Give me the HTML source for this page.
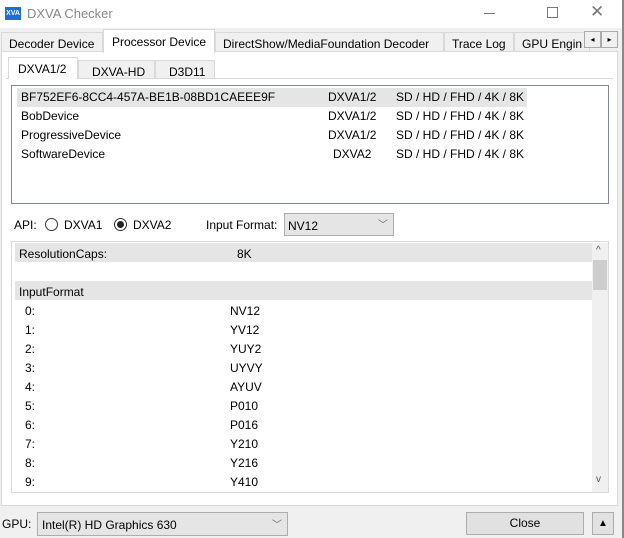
<!DOCTYPE html><html><head><style>
*{margin:0;padding:0;box-sizing:border-box}
body{width:624px;height:538px;background:#f0f0f0;font-family:"Liberation Sans",sans-serif;font-size:12px;color:#000;position:relative;overflow:hidden}
.a{position:absolute;white-space:nowrap}
</style></head><body>
<div class="a" style="left:0;top:0;width:624px;height:28px;background:#fff"></div>
<div class="a" style="left:5px;top:7px;width:16px;height:13px;background:#1e6fd0;color:#fff;font-size:7px;font-weight:bold;line-height:13px;text-align:center">XVA</div>
<div class="a" style="left:27px;top:6px;font-size:13px;color:#888">DXVA Checker</div>
<div class="a" style="left:484px;top:13px;width:11px;height:1px;background:#777"></div>
<div class="a" style="left:547px;top:7px;width:11px;height:11px;border:1px solid #777"></div>
<div class="a" style="left:590px;top:2px;font-size:17px;color:#777">✕</div>
<div class="a" style="left:622px;top:0;width:2px;height:538px;background:#888"></div>
<div class="a" style="left:1px;top:51px;width:617px;height:455px;border:1px solid #d9d9d9;background:#fff"></div>
<div class="a" style="left:1px;top:32px;width:102px;height:20px;border:1px solid #d9d9d9;background:#f0f0f0;padding:4px 0 0 7px">Decoder Device</div>
<div class="a" style="left:103px;top:29px;width:112px;height:24px;border:1px solid #d9d9d9;border-bottom:none;background:#fff;padding:5px 0 0 8px">Processor Device</div>
<div class="a" style="left:215px;top:32px;width:229px;height:20px;border:1px solid #d9d9d9;background:#f0f0f0;padding:4px 0 0 7px">DirectShow/MediaFoundation Decoder</div>
<div class="a" style="left:444px;top:32px;width:70px;height:20px;border:1px solid #d9d9d9;background:#f0f0f0;padding:4px 0 0 7px">Trace Log</div>
<div class="a" style="left:514px;top:32px;width:76px;height:20px;border:1px solid #d9d9d9;background:#f0f0f0;padding:4px 0 0 7px;overflow:hidden">GPU Engin</div>
<div class="a" style="left:584px;top:31px;width:17px;height:17px;border:1px solid #aaa;background:#f0f0f0;font-size:8px;text-align:center;line-height:15px">◂</div>
<div class="a" style="left:601px;top:31px;width:17px;height:17px;border:1px solid #aaa;background:#f0f0f0;font-size:8px;text-align:center;line-height:15px">▸</div>
<div class="a" style="left:6px;top:78px;width:607px;height:424px;border-top:1px solid #d9d9d9"></div>
<div class="a" style="left:8px;top:57px;width:70px;height:22px;border:1px solid #d9d9d9;border-bottom:none;background:#fff;padding:4px 0 0 9px">DXVA1/2</div>
<div class="a" style="left:78px;top:60px;width:77px;height:19px;border:1px solid #d9d9d9;background:#f0f0f0;padding:4px 0 0 13px">DXVA-HD</div>
<div class="a" style="left:155px;top:60px;width:60px;height:19px;border:1px solid #d9d9d9;background:#f0f0f0;padding:4px 0 0 13px">D3D11</div>
<div class="a" style="left:11px;top:85px;width:598px;height:119px;border:1px solid #828790;background:#fff"></div>
<div class="a" style="left:17px;top:88px;width:510px;height:19px;background:#e5e5e5"></div>
<div class="a" style="left:21px;top:90px;line-height:15px">BF752EF6-8CC4-457A-BE1B-08BD1CAEEE9F</div>
<div class="a" style="left:21px;top:109px;line-height:15px">BobDevice</div>
<div class="a" style="left:21px;top:128px;line-height:15px">ProgressiveDevice</div>
<div class="a" style="left:21px;top:147px;line-height:15px">SoftwareDevice</div>
<div class="a" style="left:328px;top:90px;line-height:15px">DXVA1/2</div>
<div class="a" style="left:328px;top:109px;line-height:15px">DXVA1/2</div>
<div class="a" style="left:328px;top:128px;line-height:15px">DXVA1/2</div>
<div class="a" style="left:333px;top:147px;line-height:15px">DXVA2</div>
<div class="a" style="left:396px;top:90px;line-height:15px">SD / HD / FHD / 4K / 8K</div>
<div class="a" style="left:396px;top:109px;line-height:15px">SD / HD / FHD / 4K / 8K</div>
<div class="a" style="left:396px;top:128px;line-height:15px">SD / HD / FHD / 4K / 8K</div>
<div class="a" style="left:396px;top:147px;line-height:15px">SD / HD / FHD / 4K / 8K</div>
<div class="a" style="left:14px;top:218px">API:</div>
<div class="a" style="left:45px;top:218px;width:13px;height:13px;border:1px solid #333;border-radius:50%;background:#fff"></div>
<div class="a" style="left:64px;top:218px">DXVA1</div>
<div class="a" style="left:114px;top:218px;width:13px;height:13px;border:1px solid #333;border-radius:50%;background:#fff"></div>
<div class="a" style="left:117px;top:221px;width:7px;height:7px;border-radius:50%;background:#222"></div>
<div class="a" style="left:133px;top:218px">DXVA2</div>
<div class="a" style="left:206px;top:218px">Input Format:</div>
<div class="a" style="left:284px;top:213px;width:110px;height:23px;border:1px solid #adadad;background:#e5e5e5;padding:5px 0 0 3px">NV12</div>
<div class="a" style="left:378px;top:216px;font-size:10px;color:#666">﹀</div>
<div class="a" style="left:11px;top:241px;width:598px;height:252px;border:1px solid #d9d9d9;background:#fff"></div>
<div class="a" style="left:15px;top:243px;width:577px;height:19px;background:#e5e5e5"></div>
<div class="a" style="left:15px;top:281px;width:577px;height:19px;background:#e5e5e5"></div>
<div class="a" style="left:592px;top:243px;width:16px;height:249px;background:#f0f0f0"></div>
<div class="a" style="left:593px;top:260px;width:14px;height:30px;background:#cdcdcd"></div>
<div class="a" style="left:596px;top:245px;font-size:10px;color:#555">^</div>
<div class="a" style="left:596px;top:474px;font-size:10px;color:#555">v</div>
<div class="a" style="left:19px;top:247px">ResolutionCaps:</div>
<div class="a" style="left:237px;top:247px">8K</div>
<div class="a" style="left:19px;top:285px">InputFormat</div>
<div class="a" style="left:25px;top:302px;line-height:19px">0:<br>1:<br>2:<br>3:<br>4:<br>5:<br>6:<br>7:<br>8:<br>9:</div>
<div class="a" style="left:230px;top:302px;line-height:19px">NV12<br>YV12<br>YUY2<br>UYVY<br>AYUV<br>P010<br>P016<br>Y210<br>Y216<br>Y410</div>
<div class="a" style="left:2px;top:517px">GPU:</div>
<div class="a" style="left:37px;top:512px;width:251px;height:24px;border:1px solid #adadad;background:#e5e5e5;padding:5px 0 0 4px">Intel(R) HD Graphics 630</div>
<div class="a" style="left:272px;top:516px;font-size:10px;color:#666">﹀</div>
<div class="a" style="left:466px;top:512px;width:118px;height:23px;border:1px solid #adadad;background:#e1e1e1;text-align:center;line-height:21px">Close</div>
<div class="a" style="left:592px;top:512px;width:22px;height:23px;border:1px solid #adadad;background:#e1e1e1;text-align:center;line-height:21px;font-size:10px">▲</div>
</body></html>
